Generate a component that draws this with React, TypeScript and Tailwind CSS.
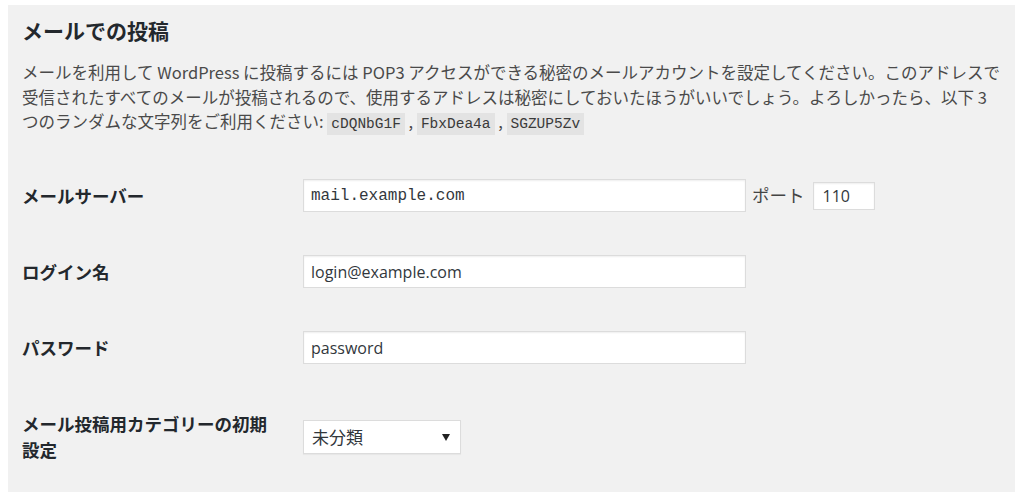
import React from "react";

const jp = "font-['Noto_Sans_CJK_JP',sans-serif]";

function Code({ children }: { children: React.ReactNode }) {
  return (
    <code className="bg-[#e3e3e3] px-[4px] py-[3px] font-['Liberation_Mono',monospace] text-[14.5px] text-[#3a3a3a]">
      {children}
    </code>
  );
}

function TextInput({ value, mono, w = "w-[443px]" }: { value: string; mono?: boolean; w?: string }) {
  return (
    <div
      className={`${w} h-[33px] bg-white border border-[#dcdcdc] shadow-[inset_0_1px_2px_rgba(0,0,0,0.07)] flex items-center px-[7px] text-[16px] text-[#32373c] ${
        mono ? "font-['Liberation_Mono',monospace]" : "font-['Open_Sans',sans-serif]"
      }`}
    >
      {value}
    </div>
  );
}

function Row({ label, h = "h-[76px]", children }: { label: React.ReactNode; h?: string; children: React.ReactNode }) {
  return (
    <div className={`flex items-center ${h}`}>
      <div className={`w-[281px] pr-[20px] text-[17.5px] leading-[26px] font-bold text-[#23282d] ${jp}`}>{label}</div>
      <div className="flex items-center">{children}</div>
    </div>
  );
}

export default function App() {
  return (
    <div className="w-[1024px] h-[497px] bg-white pt-[5px] pl-[8px]">
      <div className="w-[1007px] h-[487px] bg-[#f1f1f1] px-[14px] pt-[10px]">
        <h2 className={`text-[21px] leading-[30px] font-bold text-[#23282d] ${jp}`}>メールでの投稿</h2>
        <p className={`mt-[15px] text-[16.5px] leading-[24.5px] text-[#4a4a4a] ${jp} whitespace-nowrap`}>
          メールを利用して WordPress に投稿するには POP3 アクセスができる秘密のメールアカウントを設定してください。このアドレスで
          <br />
          受信されたすべてのメールが投稿されるので、使用するアドレスは秘密にしておいたほうがいいでしょう。よろしかったら、以下 3
          <br />
          つのランダムな文字列をご利用ください:&nbsp;<Code>cDQNbG1F</Code> , <Code>FbxDea4a</Code> , <Code>SGZUP5Zv</Code>
        </p>
        <div className="mt-[21px]">
          <Row label="メールサーバー">
            <TextInput value="mail.example.com" mono />
            <span className={`ml-[6px] text-[17.5px] text-[#444] ${jp}`}>ポート</span>
            <div className="ml-[8px] w-[62px] h-[28px] bg-white border border-[#dcdcdc] shadow-[inset_0_1px_2px_rgba(0,0,0,0.07)] flex items-center px-[9px] text-[16px] text-[#32373c] font-['Open_Sans',sans-serif]">
              110
            </div>
          </Row>
          <Row label="ログイン名">
            <TextInput value="login@example.com" />
          </Row>
          <Row label="パスワード">
            <TextInput value="password" />
          </Row>
          <Row label="メール投稿用カテゴリーの初期設定" h="h-[102px]">
            <div className="w-[158px] h-[34px] bg-white border border-[#dcdcdc] shadow-[0_1px_1px_rgba(0,0,0,0.04)] flex items-center justify-between pl-[8px] pr-[10px]">
              <span className={`text-[17px] text-[#32373c] ${jp}`}>未分類</span>
              <svg width="8" height="8" viewBox="0 0 8 8">
                <path d="M0 1 L8 1 L4 8 Z" fill="#222" />
              </svg>
            </div>
          </Row>
        </div>
      </div>
    </div>
  );
}
